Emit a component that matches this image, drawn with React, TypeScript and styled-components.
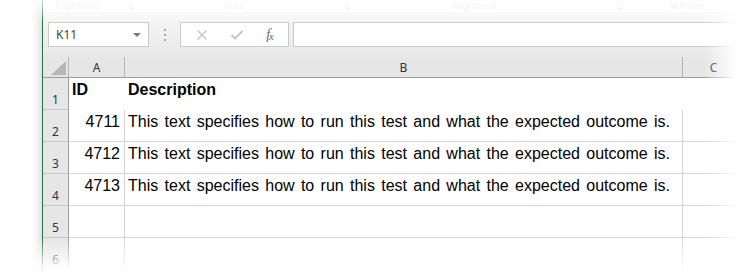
import React from "react";
import styled, { createGlobalStyle } from "styled-components";

const GlobalStyle = createGlobalStyle`
  html, body {
    margin: 0;
    padding: 0;
    background: #fff;
  }
  body {
    font-family: "Liberation Sans", Arial, sans-serif;
  }
`;

const Page = styled.div`
  position: relative;
  width: 743px;
  height: 278px;
  overflow: hidden;
  padding-left: 42px;
  box-sizing: border-box;
`;

const Window = styled.div`
  width: 702px;
  height: 300px;
  background: #fff;
  border-left: 1px solid #217346;
  box-shadow: -3px 0 9px rgba(0, 0, 0, 0.14);
`;

/* ribbon group captions, mostly faded away */
const RibbonStrip = styled.div`
  display: flex;
  height: 13px;
  background: #fff;
  border-bottom: 1px solid #f0f0f0;
  box-sizing: border-box;
`;

const RibbonGroup = styled.div<{ $w: number; $pad: number }>`
  display: flex;
  align-items: center;
  width: ${(p) => p.$w}px;
  padding-left: ${(p) => p.$pad}px;
  box-sizing: border-box;
  flex-shrink: 0;
`;

const RibbonLabel = styled.span`
  font-family: "Liberation Sans", sans-serif;
  font-size: 10px;
  line-height: 12px;
  color: #e4e4e4;
`;

const Launcher = styled.svg`
  margin-left: auto;
  margin-right: 3px;
`;

const Toolbar = styled.div`
  display: flex;
  align-items: flex-start;
  height: 44px;
  padding: 9px 0 0 5px;
  box-sizing: border-box;
  background: linear-gradient(#f7f7f7, #e8e8e8);
`;

const NameBox = styled.div`
  display: flex;
  align-items: center;
  justify-content: space-between;
  width: 101px;
  height: 25px;
  padding: 0 7px 0 7px;
  box-sizing: border-box;
  background: #fff;
  border: 1px solid #c9c9c9;
  font-family: "Noto Sans", sans-serif;
  font-size: 12px;
  color: #444;
`;

const Arrow = styled.span`
  width: 0;
  height: 0;
  border-left: 4px solid transparent;
  border-right: 4px solid transparent;
  border-top: 4px solid #7a7a7a;
`;

const Dots = styled.div`
  display: flex;
  flex-direction: column;
  align-items: center;
  justify-content: center;
  gap: 3px;
  width: 31px;
  height: 25px;

  span {
    width: 2px;
    height: 2px;
    background: #a8a8a8;
  }
`;

const FxBox = styled.div`
  display: flex;
  align-items: center;
  justify-content: space-around;
  width: 109px;
  height: 25px;
  padding: 0 4px;
  box-sizing: border-box;
  background: #fff;
  border: 1px solid #c9c9c9;
`;

const Fx = styled.span`
  font-family: "Liberation Serif", serif;
  font-style: italic;
  font-size: 14px;
  color: #666;
  letter-spacing: -1px;

  sub {
    font-size: 11px;
    vertical-align: -1px;
  }
`;

const FormulaBar = styled.div`
  flex: 1;
  height: 25px;
  margin-left: 4px;
  background: #fff;
  border: 1px solid #c9c9c9;
  box-sizing: border-box;
`;

const Grid = styled.div<{ $h: number }>`
  display: grid;
  grid-template-columns: 26px 56px 558px 1fr;
  height: ${(p) => p.$h}px;
`;

const ColHead = styled.div`
  display: flex;
  align-items: center;
  justify-content: center;
  position: relative;
  background: #e6e6e6;
  border-right: 1px solid #b4b4b4;
  border-bottom: 1px solid #9d9d9d;
  font-family: "Noto Sans", sans-serif;
  font-size: 12px;
  color: #333;
  padding-top: 1px;
`;

const Corner = styled.svg`
  position: absolute;
  right: 2px;
  bottom: 2px;
`;

const RowHead = styled.div`
  display: flex;
  align-items: flex-end;
  justify-content: center;
  padding-bottom: 1px;
  background: #e6e6e6;
  border-right: 1px solid #9d9d9d;
  border-bottom: 1px solid #c6c6c6;
  font-family: "Noto Sans", sans-serif;
  font-size: 12px;
  line-height: 16px;
  color: #333;
`;

const Cell = styled.div<{ $plain?: boolean; $right?: boolean; $bold?: boolean }>`
  padding: 3px 4px 0 3px;
  border-right: 1px solid ${(p) => (p.$plain ? "#fff" : "#d4d4d4")};
  border-bottom: 1px solid ${(p) => (p.$plain ? "#fff" : "#d4d4d4")};
  font-size: 16px;
  line-height: 18px;
  font-weight: ${(p) => (p.$bold ? 700 : 400)};
  color: #000;
  text-align: ${(p) => (p.$right ? "right" : "left")};
  white-space: nowrap;
  overflow: hidden;
`;

const JustifiedCell = styled(Cell)`
  padding-right: 12px;
  white-space: normal;
  text-align: justify;
  text-align-last: justify;
`;

const Fade = styled.div<{ $dir: "top" | "right" | "bottom" }>`
  position: absolute;
  pointer-events: none;
  ${(p) =>
    p.$dir === "top"
      ? `top: 0; left: 0; right: 0; height: 24px;
         background: linear-gradient(to bottom, rgba(255,255,255,0.8), rgba(255,255,255,0));`
      : p.$dir === "right"
      ? `top: 0; bottom: 0; left: 704px; width: 39px;
         background: linear-gradient(to right, rgba(255,255,255,0), #fff 85%);`
      : `left: 0; right: 0; top: 238px; height: 40px;
         background: linear-gradient(to bottom, rgba(255,255,255,0), #fff 82%);`}
`;

const groups = [
  { label: "Clipboard", w: 93, pad: 13 },
  { label: "Font", w: 216, pad: 88 },
  { label: "Alignment", w: 273, pad: 100 },
  { label: "Number", w: 110, pad: 44 },
];

const tests = [4711, 4712, 4713];
const desc = "This text specifies how to run this test and what the expected outcome is.";

function LauncherIcon() {
  return (
    <Launcher width="7" height="7" viewBox="0 0 7 7">
      <path d="M0.5 0.5 H6.5 V6.5 M6.5 6.5 L2 2 M3 6.5 H6.5" stroke="#e2e2e2" fill="none" />
    </Launcher>
  );
}

export default function App() {
  return (
    <>
      <GlobalStyle />
      <Page>
        <Window>
          <RibbonStrip>
            {groups.map((g) => (
              <RibbonGroup key={g.label} $w={g.w} $pad={g.pad}>
                <RibbonLabel>{g.label}</RibbonLabel>
                {g.label !== "Number" && <LauncherIcon />}
              </RibbonGroup>
            ))}
          </RibbonStrip>

          <Toolbar>
            <NameBox>
              K11
              <Arrow />
            </NameBox>
            <Dots>
              <span />
              <span />
              <span />
            </Dots>
            <FxBox>
              <svg width="12" height="12" viewBox="0 0 12 12">
                <path d="M1.5 1.5 L10.5 10.5 M10.5 1.5 L1.5 10.5" stroke="#c4c4c4" strokeWidth="1.3" />
              </svg>
              <svg width="14" height="12" viewBox="0 0 14 12">
                <path d="M1.5 6 L5 9.5 L12.5 2" stroke="#c4c4c4" strokeWidth="1.8" fill="none" />
              </svg>
              <Fx>
                f<sub>x</sub>
              </Fx>
            </FxBox>
            <FormulaBar />
          </Toolbar>

          <Grid $h={21}>
            <ColHead>
              <Corner width="15" height="14" viewBox="0 0 15 14">
                <polygon points="0,14 15,14 15,0" fill="#b6b6b6" />
              </Corner>
            </ColHead>
            <ColHead>A</ColHead>
            <ColHead>B</ColHead>
            <ColHead>C</ColHead>
          </Grid>

          <Grid $h={32}>
            <RowHead>1</RowHead>
            <Cell $plain $bold>ID</Cell>
            <Cell $plain $bold>Description</Cell>
            <Cell $plain />
          </Grid>

          {tests.map((id, i) => (
            <Grid $h={32} key={id}>
              <RowHead>{i + 2}</RowHead>
              <Cell $right>{id}</Cell>
              <JustifiedCell>{desc}</JustifiedCell>
              <Cell />
            </Grid>
          ))}

          {[5, 6].map((n) => (
            <Grid $h={32} key={n}>
              <RowHead>{n}</RowHead>
              <Cell />
              <Cell />
              <Cell />
            </Grid>
          ))}
        </Window>
        <Fade $dir="top" />
        <Fade $dir="right" />
        <Fade $dir="bottom" />
      </Page>
    </>
  );
}
